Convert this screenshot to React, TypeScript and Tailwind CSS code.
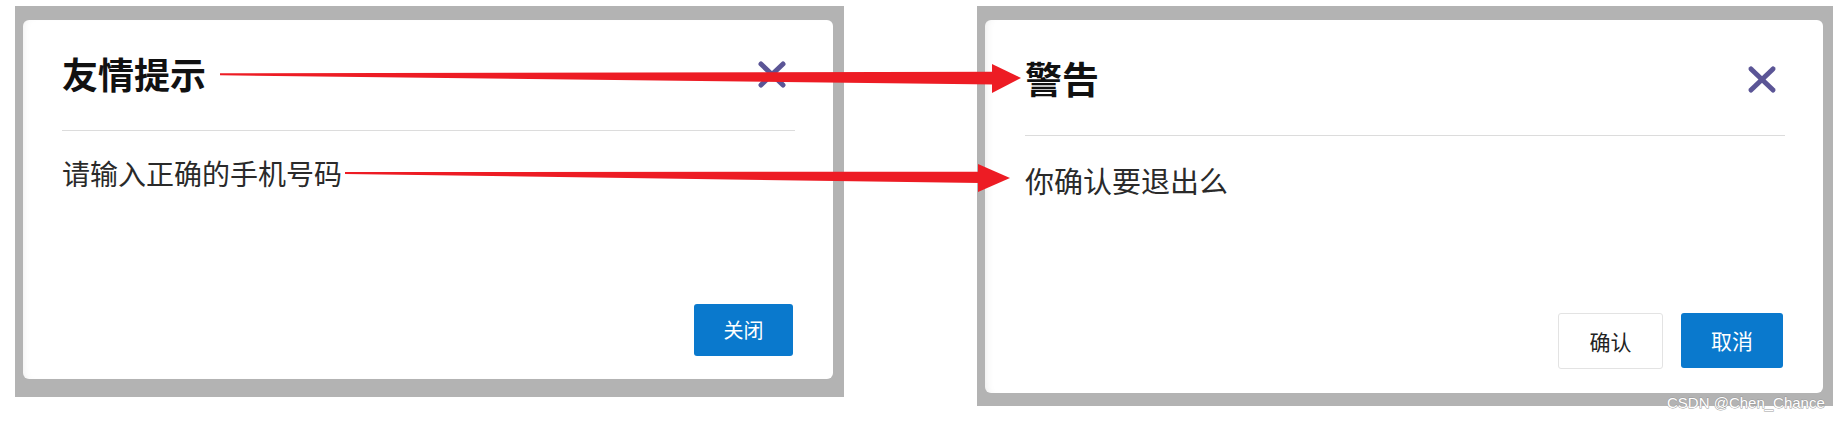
import React from "react";

const cjk = "font-['Microsoft_YaHei','Noto_Sans_CJK_SC',sans-serif]";

function CloseIcon() {
  return (
    <svg width="30" height="29" viewBox="0 0 30 29" className="shrink-0">
      <line x1="4" y1="4" x2="26" y2="25" stroke="#5b5596" strokeWidth="5" strokeLinecap="round" />
      <line x1="26" y1="4" x2="4" y2="25" stroke="#5b5596" strokeWidth="5" strokeLinecap="round" />
    </svg>
  );
}

export default function App() {
  return (
    <div className={`relative w-[1847px] h-[421px] bg-white overflow-hidden ${cjk}`}>
      <div className="flex items-start">
        {/* Left dialog */}
        <div className="ml-[15px] mt-[6px] w-[829px] h-[391px] bg-[#b3b3b3] pt-[14px] pl-[8px] pr-[11px] pb-[18px] flex">
          <div className="flex-1 bg-white rounded-[6px] flex flex-col pl-[39px] pr-[38px] shadow-[inset_6px_0_8px_-6px_rgba(0,0,0,0.08)]">
            <div className="h-[111px] flex items-center justify-between border-b border-[#dcdcdc]">
              <span className="text-[36px] leading-none font-bold text-[#111] pb-[4px]">友情提示</span>
              <div className="mr-[8px] pb-[2px]">
                <CloseIcon />
              </div>
            </div>
            <div className="mt-[28px] text-[28px] leading-none text-[#2a2a2a]">请输入正确的手机号码</div>
            <div className="mt-auto pb-[23px] flex justify-end">
              <button className="mr-[2px] w-[99px] h-[52px] rounded-[3px] bg-[#0a79cd] text-white text-[20px] leading-none">
                关闭
              </button>
            </div>
          </div>
        </div>

        {/* Right dialog */}
        <div className="ml-[133px] mt-[6px] w-[856px] h-[400px] bg-[#b3b3b3] pt-[14px] pl-[8px] pr-[10px] pb-[13px] flex">
          <div className="flex-1 bg-white rounded-[6px] flex flex-col pl-[40px] pr-[38px] shadow-[inset_8px_0_10px_-8px_rgba(0,0,0,0.1)]">
            <div className="h-[116px] flex items-center justify-between border-b border-[#dcdcdc]">
              <span className="text-[37px] leading-none font-bold text-[#111] pt-[2px]">警告</span>
              <div className="mr-[8px] pt-[4px]">
                <CloseIcon />
              </div>
            </div>
            <div className="mt-[30px] text-[29px] leading-none text-[#2a2a2a]">你确认要退出么</div>
            <div className="mt-auto pb-[24px] flex justify-end gap-[18px]">
              <button className="w-[105px] h-[56px] rounded-[3px] bg-white border border-[#e3e3e3] text-[#222] text-[21px] leading-none">
                确认
              </button>
              <button className="mr-[2px] w-[102px] h-[55px] rounded-[3px] bg-[#0a79cd] text-white text-[21px] leading-none">
                取消
              </button>
            </div>
          </div>
        </div>
      </div>

      {/* Annotation arrows overlay */}
      <svg className="absolute left-0 top-0 pointer-events-none" width="1847" height="421" viewBox="0 0 1847 421">
        <polygon points="220,73.3 995,71.7 995,84.5 220,75.3" fill="#ed1c24" />
        <polygon points="992,64 1021,78 992,93" fill="#ed1c24" />
        <polygon points="345,172 980,171.7 980,183 345,174" fill="#ed1c24" />
        <polygon points="978,164 1010,178 978,192" fill="#ed1c24" />
      </svg>

      {/* Watermark */}
      <div className="absolute left-[1667px] top-[395px] font-['Liberation_Sans',Arial,sans-serif] text-[15px] leading-none text-white [-webkit-text-stroke:1px_#9a9a9a] [paint-order:stroke_fill] whitespace-nowrap">
        CSDN @Chen_Chance
      </div>
    </div>
  );
}
